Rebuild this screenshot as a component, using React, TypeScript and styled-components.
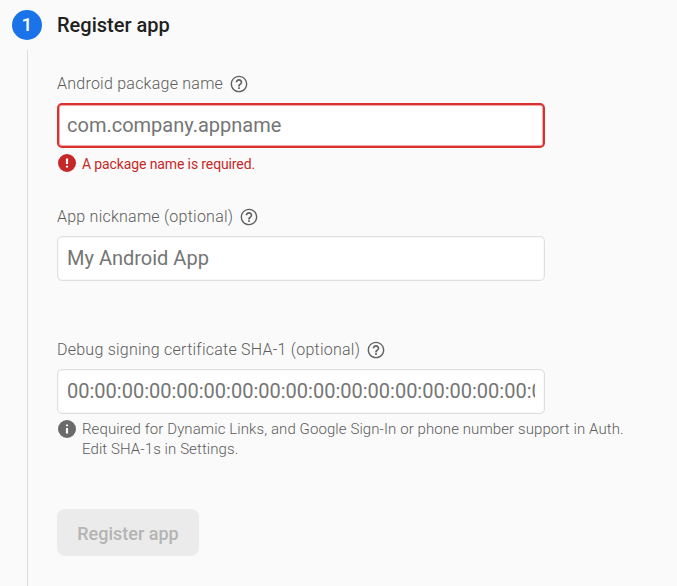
import React from "react";
import styled, { createGlobalStyle } from "styled-components";

const Global = createGlobalStyle`
  * { box-sizing: border-box; }
  html, body { margin: 0; background: #fafafa; }
  body { font-family: Roboto, sans-serif; overflow: hidden; }
`;
const Page = styled.main`
  display: flex;
  width: 677px;
  height: 586px;
  padding: 10px 0 0 12px;
  background: #fafafa;
`;
const Rail = styled.div`
  width: 30px;
  display: flex;
  flex-direction: column;
  align-items: center;
`;
const StepNumber = styled.div`
  width: 30px;
  height: 30px;
  flex: none;
  border-radius: 50%;
  background: #1a73e8;
  color: #fff;
  font-size: 19px;
  font-weight: 500;
  line-height: 30px;
  text-align: center;
`;
const Line = styled.div`
  width: 1px;
  flex: 1;
  margin: 10px 0 0 0;
  background: #dcdcdc;
`;
const Content = styled.form`
  flex: 1;
  padding-left: 15px;
`;
const Title = styled.h1`
  margin: 0;
  height: 30px;
  line-height: 30px;
  font-size: 20px;
  font-weight: 500;
  color: #212121;
  margin-bottom: 32px;
`;
const Field = styled.div`
  height: 133px;
`;
const Label = styled.label`
  display: flex;
  align-items: center;
  gap: 6px;
  height: 24px;
  margin-bottom: 7px;
  padding-bottom: 1px;
  font-size: 16px;
  font-weight: 300;
  letter-spacing: 0.24px;
  color: #5c5c5c;
  white-space: nowrap;
  svg { position: relative; top: 0.5px; }
`;
const Input = styled.input<{ $error?: boolean }>`
  display: block;
  width: 488px;
  height: 45px;
  padding: 0 ${(p) => (p.$error ? 8 : 9)}px 2px;
  border: ${(p) => (p.$error ? "2px solid #d93030" : "1px solid #dfdfdf")};
  box-shadow: ${(p) => (p.$error ? "inset 0 0 0 1px #efa9a9" : "inset 0 0 0 1px #f8f8f8")};
  border-radius: 5px;
  background: #fff;
  font: 400 20px Roboto, sans-serif;
  outline: 0;
  &::placeholder { color: #757575; opacity: 1; }
`;
const Message = styled.div<{ $error?: boolean }>`
  display: flex;
  align-items: flex-start;
  gap: 6px;
  margin-top: ${(p) => (p.$error ? 6 : 5)}px;
  padding-left: 1px;
  font-size: ${(p) => (p.$error ? 14 : 15)}px;
  font-weight: ${(p) => (p.$error ? 400 : 300)};
  letter-spacing: ${(p) => (p.$error ? "-0.12px" : "0.092px")};
  line-height: 20px;
  color: ${(p) => (p.$error ? "#c62828" : "#5c5c5c")};
  white-space: nowrap;
  svg { flex: none; margin-top: ${(p) => (p.$error ? 0 : 1)}px; }
`;
const Submit = styled.button`
  width: 142px;
  height: 47px;
  margin-top: 38px;
  padding: 2px 0 0;
  border: 0;
  border-radius: 8px;
  background: #ebebeb;
  color: #b4b4b4;
  font: 500 18px Roboto, sans-serif;
`;

const Help = () => (
  <svg width="20" height="20" viewBox="0 0 24 24" fill="#616161">
    <path d="M11 18h2v-2h-2v2zm1-16C6.48 2 2 6.48 2 12s4.480 10 10 10 10-4.480 10-10S17.520 2 12 2zm0 18.300c-4.580 0-8.300-3.720-8.300-8.300s3.720-8.300 8.300-8.300 8.300 3.720 8.300 8.300-3.720 8.300-8.300 8.300zm0-14.300c-2.210 0-4 1.790-4 4h2c0-1.100.9-2 2-2s2 .9 2 2c0 2-3 1.750-3 5h2c0-2.250 3-2.500 3-5 0-2.210-1.790-4-4-4z" />
  </svg>
);
const Alert = () => (
  <svg width="18" height="18" viewBox="2 2 20 20" fill="#c62828">
    <path d="M12 2a10 10 0 1 0 0 20 10 10 0 0 0 0-20zm1.200 15h-2.400v-2h2.400zm0-4h-2.400V7h2.400z" />
  </svg>
);
const Info = () => (
  <svg width="18" height="18" viewBox="2 2 20 20" fill="#6a6a6a">
    <path d="M12 2a10 10 0 1 0 0 20 10 10 0 0 0 0-20zm1.200 15h-2.400v-6h2.400zm0-8h-2.400V7h2.400z" />
  </svg>
);

export default function App() {
  return (
    <>
      <Global />
      <Page>
        <Rail>
          <StepNumber>1</StepNumber>
          <Line />
        </Rail>
        <Content>
          <Title>Register app</Title>
          <Field>
            <Label>Android package name <Help /></Label>
            <Input $error placeholder="com.company.appname" />
            <Message $error><Alert /><span>A package name is required.</span></Message>
          </Field>
          <Field>
            <Label>App nickname (optional) <Help /></Label>
            <Input placeholder="My Android App" />
          </Field>
          <Field>
            <Label>Debug signing certificate SHA-1 (optional) <Help /></Label>
            <Input placeholder="00:00:00:00:00:00:00:00:00:00:00:00:00:00:00:00:00:00:00:00" />
            <Message>
              <Info />
              <span>Required for Dynamic Links, and Google Sign-In or phone number support in Auth.<br />Edit SHA-1s in Settings.</span>
            </Message>
          </Field>
          <Submit type="button" disabled>Register app</Submit>
        </Content>
      </Page>
    </>
  );
}
